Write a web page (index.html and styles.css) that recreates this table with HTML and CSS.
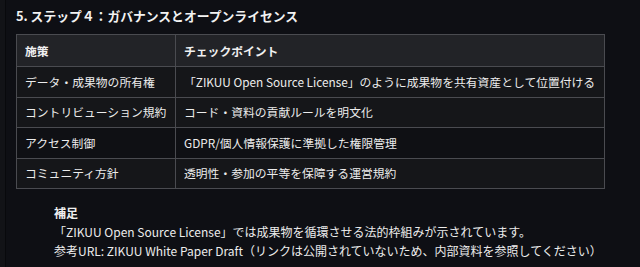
FILE: index.html
```html
<!DOCTYPE html>
<html lang="ja">
<head>
<meta charset="utf-8">
<link rel="stylesheet" href="styles.css">
</head>
<body>
<div class="page">
  <div class="edge"></div>
  <main class="content">
    <h3 class="title">5. ステップ４：ガバナンスとオープンライセンス</h3>
    <table class="grid">
      <thead>
        <tr><th class="c1">施策</th><th>チェックポイント</th></tr>
      </thead>
      <tbody>
        <tr><td class="c1">データ・成果物の所有権</td><td>「ZIKUU Open Source License」のように成果物を共有資産として位置付ける</td></tr>
        <tr><td class="c1">コントリビューション規約</td><td>コード・資料の貢献ルールを明文化</td></tr>
        <tr class="dark"><td class="c1">アクセス制御</td><td>GDPR/個人情報保護に準拠した権限管理</td></tr>
        <tr><td class="c1">コミュニティ方針</td><td>透明性・参加の平等を保障する運営規約</td></tr>
      </tbody>
    </table>
    <div class="note">
      <div class="note-title">補足</div>
      <div class="note-line">「ZIKUU Open Source License」では成果物を循環させる法的枠組みが示されています。</div>
      <div class="note-line">参考URL: ZIKUU White Paper Draft（リンクは公開されていないため、内部資料を参照してください）</div>
    </div>
  </main>
</div>
</body>
</html>
```

FILE: styles.css
```css
html, body {
  margin: 0;
  padding: 0;
  background: #0e0f14;
}
body {
  width: 640px;
  height: 267px;
  overflow: hidden;
  font-family: "Noto Sans CJK JP", "Noto Sans", sans-serif;
  color: #e6e6e6;
}
.page {
  display: flex;
  height: 267px;
}
.edge {
  width: 5px;
  flex: none;
  background: #121317;
  border-right: 1px solid #08090c;
}
.content {
  padding: 6px 0 0 10px;
  flex: 1;
}
.title {
  margin: 0 0 9px 0;
  font-size: 12.8px;
  line-height: 19px;
  font-weight: 700;
  color: #f2f2f2;
}
.grid {
  border-collapse: collapse;
  width: 589px;
  font-size: 11.8px;
  color: #ececec;
}
.grid th, .grid td {
  border: 1px solid #4a4b50;
  padding: 0 8px;
  text-align: left;
  white-space: nowrap;
  line-height: 16px;
}
.grid th {
  height: 31px;
  background: #222327;
  font-weight: 700;
  color: #f0f0f0;
}
.grid td {
  height: 29.5px;
  background: #151619;
}
.grid tr.dark td {
  background: #0f1014;
}
.grid .c1 {
  width: 142px;
}
.note {
  padding: 14px 0 0 38px;
  font-size: 12px;
  line-height: 19px;
  color: #ececec;
}
.note-title {
  font-weight: 700;
  color: #f0f0f0;
}
```
